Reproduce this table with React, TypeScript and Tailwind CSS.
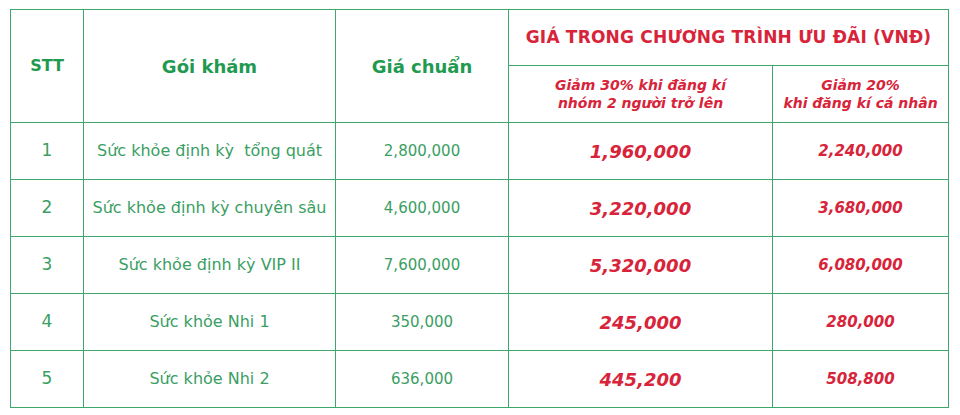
import React from "react";

const rows = [
  ["1", "Sức khỏe định kỳ  tổng quát", "2,800,000", "1,960,000", "2,240,000"],
  ["2", "Sức khỏe định kỳ chuyên sâu", "4,600,000", "3,220,000", "3,680,000"],
  ["3", "Sức khỏe định kỳ VIP II", "7,600,000", "5,320,000", "6,080,000"],
  ["4", "Sức khỏe Nhi 1", "350,000", "245,000", "280,000"],
  ["5", "Sức khỏe Nhi 2", "636,000", "445,200", "508,800"],
];

const cell = "border-[1.5px] border-[#3fa66c] text-center align-middle p-0";

export default function App() {
  return (
    <div className="w-[960px] h-[415px] bg-white pl-[10px] pt-[9px]" style={{ fontFamily: '"DejaVu Sans", sans-serif' }}>
      <table className="border-collapse table-fixed w-[938px]">
        <colgroup>
          <col className="w-[73px]" />
          <col className="w-[252px]" />
          <col className="w-[173px]" />
          <col className="w-[264px]" />
          <col className="w-[176px]" />
        </colgroup>
        <thead>
          <tr className="h-[56px]">
            <th rowSpan={2} className={`${cell} text-[#1f9a50] text-[16px] font-bold`}>STT</th>
            <th rowSpan={2} className={`${cell} text-[#1f9a50] text-[18px] font-bold`}>Gói khám</th>
            <th rowSpan={2} className={`${cell} text-[#1f9a50] text-[18px] font-bold`}>Giá chuẩn</th>
            <th colSpan={2} className={`${cell} text-[#d8243a] text-[17px] font-bold tracking-[0.2px]`}>GIÁ TRONG CHƯƠNG TRÌNH ƯU ĐÃI (VNĐ)</th>
          </tr>
          <tr className="h-[57px]">
            <th className={`${cell} text-[#d8243a] text-[14px] font-bold italic leading-[18px]`}>
              Giảm 30% khi đăng kí
              <br />
              nhóm 2 người trở lên
            </th>
            <th className={`${cell} text-[#d8243a] text-[14px] font-bold italic leading-[18px]`}>
              Giảm 20%
              <br />
              khi đăng kí cá nhân
            </th>
          </tr>
        </thead>
        <tbody>
          {rows.map((r) => (
            <tr key={r[0]} className="h-[57px]">
              <td className={`${cell} text-[#3a9e63] text-[17px]`}>{r[0]}</td>
              <td className={`${cell} text-[#3a9e63] text-[16px] whitespace-pre`}>{r[1]}</td>
              <td className={`${cell} text-[#3a9e63] text-[15px]`}>{r[2]}</td>
              <td className={`${cell} text-[#d8243a] text-[18px] font-bold italic`}>{r[3]}</td>
              <td className={`${cell} text-[#d8243a] text-[15px] font-bold italic`}>{r[4]}</td>
            </tr>
          ))}
        </tbody>
      </table>
    </div>
  );
}
